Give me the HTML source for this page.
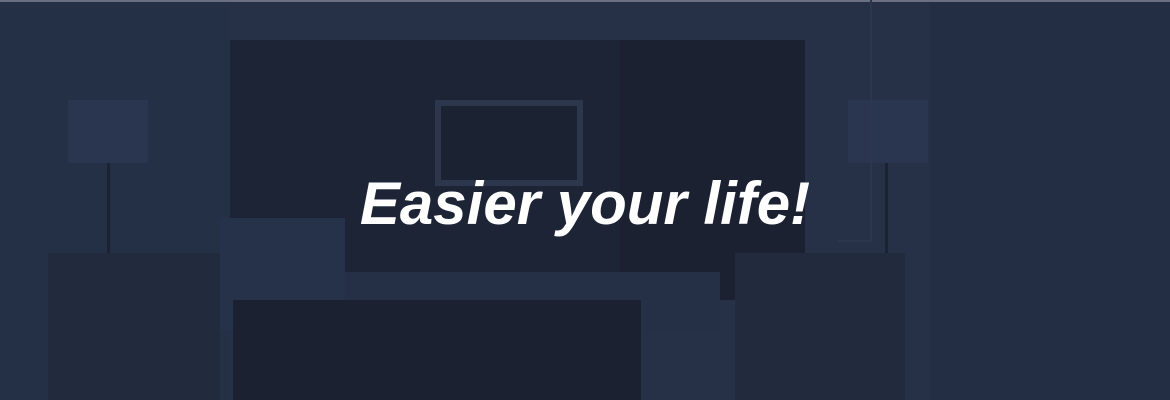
<!DOCTYPE html>
<html><head><style>
html,body{margin:0;padding:0}
body{width:1170px;height:400px;position:relative;overflow:hidden;background:#263147}
div.r{position:absolute}
h1{position:absolute;left:0;width:1170px;top:166px;margin:0;text-align:center;color:#fff;font:italic bold 60px/76px "Liberation Sans",sans-serif;letter-spacing:0px}
</style></head><body>
<div class="r" style="left:0;top:0;width:1170px;height:2px;background:#6a7080"></div>
<div class="r" style="left:0;top:2px;width:230px;height:398px;background:#243046"></div>
<div class="r" style="left:930px;top:2px;width:240px;height:398px;background:#232e44"></div>
<div class="r" style="left:230px;top:40px;width:575px;height:260px;background:#1d2435"></div>
<div class="r" style="left:620px;top:40px;width:185px;height:260px;background:#1b2131"></div>
<div class="r" style="left:435px;top:100px;width:148px;height:86px;background:#2c364c"></div>
<div class="r" style="left:441px;top:106px;width:136px;height:74px;background:#1b2232"></div>
<div class="r" style="left:68px;top:100px;width:80px;height:63px;background:#2a3550"></div>
<div class="r" style="left:848px;top:100px;width:80px;height:63px;background:#2a3550"></div>
<div class="r" style="left:107px;top:163px;width:3px;height:237px;background:#1b2232"></div>
<div class="r" style="left:885px;top:163px;width:3px;height:237px;background:#1b2232"></div>
<div class="r" style="left:220px;top:218px;width:125px;height:112px;background:#26314a"></div>
<div class="r" style="left:345px;top:272px;width:375px;height:58px;background:#252f46"></div>
<div class="r" style="left:48px;top:253px;width:172px;height:147px;background:#222b3e"></div>
<div class="r" style="left:735px;top:253px;width:170px;height:147px;background:#222b3e"></div>
<div class="r" style="left:233px;top:300px;width:408px;height:100px;background:#1b2131"></div>
<div class="r" style="left:838px;top:0;width:32px;height:240px;border:2px solid #2c364c;border-left:none;border-top:none"></div>
<h1>Easier your life!</h1>
</body></html>
